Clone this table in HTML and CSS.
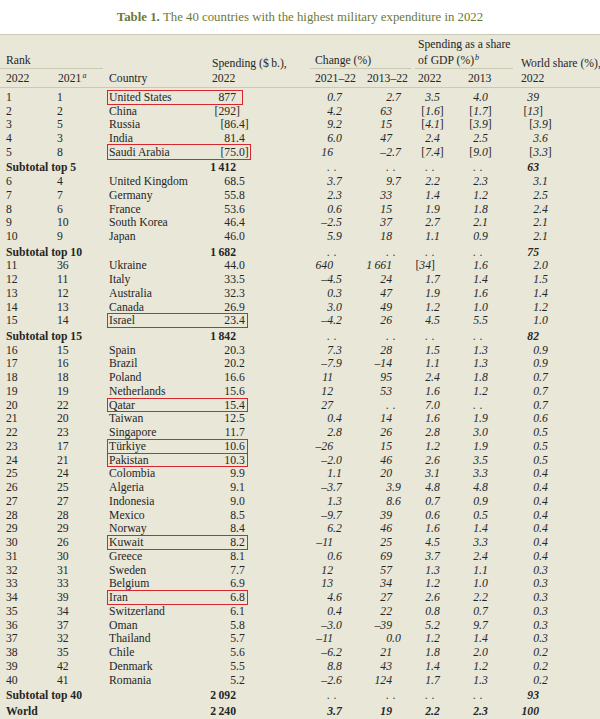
FILE: index.html
```html
<!DOCTYPE html>
<html lang="en">
<head>
<meta charset="utf-8">
<title>Table 1</title>
<link rel="stylesheet" href="styles.css">
</head>
<body>
<div class="title"><span class="tb">Table 1.</span>&nbsp;The 40 countries with the highest military expenditure in 2022</div>
<div class="table">
  <div class="head">
    <div class="h-rank">Rank</div>
    <div class="h-country">Country</div>
    <div class="h-spend">Spending ($&#8201;b.),<br>2022</div>
    <div class="h-change">Change (%)</div>
    <div class="h-gdp">Spending as a share<br>of GDP (%)<sup class="fn">b</sup></div>
    <div class="h-world">World share (%),<br>2022</div>
    <div class="h-r22">2022</div>
    <div class="h-r21">2021<sup class="fn">a</sup></div>
    <div class="h-c1">2021–22</div>
    <div class="h-c2">2013–22</div>
    <div class="h-g1">2022</div>
    <div class="h-g2">2013</div>
  </div>
  <div class="body">
    <div class="row"><span class="r1">1</span><span class="r2">1</span><span class="cn">United States</span><span class="si">877</span><span class="c1i">0</span><span class="c1f">.7</span><span class="c2i">2</span><span class="c2f">.7</span><span class="g1i">3</span><span class="g1f">.5</span><span class="g2i">4</span><span class="g2f">.0</span><span class="wi">39</span><span class="hl hl-us"></span></div>
    <div class="row"><span class="r1">2</span><span class="r2">2</span><span class="cn">China</span><span class="si"><span class="br">[</span>292</span><span class="sf"><span class="br">]</span></span><span class="c1i">4</span><span class="c1f">.2</span><span class="c2i">63</span><span class="g1i"><span class="br">[</span>1</span><span class="g1f">.6<span class="br">]</span></span><span class="g2i"><span class="br">[</span>1</span><span class="g2f">.7<span class="br">]</span></span><span class="wi"><span class="br">[</span>13</span><span class="wf"><span class="br">]</span></span></div>
    <div class="row"><span class="r1">3</span><span class="r2">5</span><span class="cn">Russia</span><span class="si"><span class="br">[</span>86</span><span class="sf">.4<span class="br">]</span></span><span class="c1i">9</span><span class="c1f">.2</span><span class="c2i">15</span><span class="g1i"><span class="br">[</span>4</span><span class="g1f">.1<span class="br">]</span></span><span class="g2i"><span class="br">[</span>3</span><span class="g2f">.9<span class="br">]</span></span><span class="wi"><span class="br">[</span>3</span><span class="wf">.9<span class="br">]</span></span></div>
    <div class="row"><span class="r1">4</span><span class="r2">3</span><span class="cn">India</span><span class="si">81</span><span class="sf">.4</span><span class="c1i">6</span><span class="c1f">.0</span><span class="c2i">47</span><span class="g1i">2</span><span class="g1f">.4</span><span class="g2i">2</span><span class="g2f">.5</span><span class="wi">3</span><span class="wf">.6</span></div>
    <div class="row"><span class="r1">5</span><span class="r2">8</span><span class="cn">Saudi Arabia</span><span class="si"><span class="br">[</span>75</span><span class="sf">.0<span class="br">]</span></span><span class="c1i">16</span><span class="c2i">–2</span><span class="c2f">.7</span><span class="g1i"><span class="br">[</span>7</span><span class="g1f">.4<span class="br">]</span></span><span class="g2i"><span class="br">[</span>9</span><span class="g2f">.0<span class="br">]</span></span><span class="wi"><span class="br">[</span>3</span><span class="wf">.3<span class="br">]</span></span><span class="hl hl-sa"></span></div>
    <div class="row sub"><span class="lab">Subtotal top 5</span><span class="si">1&#8201;412</span><span class="c1i"><span class="dots">. .</span></span><span class="c2i"><span class="dots">. .</span></span><span class="g1i"><span class="dots">. .</span></span><span class="g2i"><span class="dots">. .</span></span><span class="wi">63</span></div>
    <div class="row"><span class="r1">6</span><span class="r2">4</span><span class="cn">United Kingdom</span><span class="si">68</span><span class="sf">.5</span><span class="c1i">3</span><span class="c1f">.7</span><span class="c2i">9</span><span class="c2f">.7</span><span class="g1i">2</span><span class="g1f">.2</span><span class="g2i">2</span><span class="g2f">.3</span><span class="wi">3</span><span class="wf">.1</span></div>
    <div class="row"><span class="r1">7</span><span class="r2">7</span><span class="cn">Germany</span><span class="si">55</span><span class="sf">.8</span><span class="c1i">2</span><span class="c1f">.3</span><span class="c2i">33</span><span class="g1i">1</span><span class="g1f">.4</span><span class="g2i">1</span><span class="g2f">.2</span><span class="wi">2</span><span class="wf">.5</span></div>
    <div class="row"><span class="r1">8</span><span class="r2">6</span><span class="cn">France</span><span class="si">53</span><span class="sf">.6</span><span class="c1i">0</span><span class="c1f">.6</span><span class="c2i">15</span><span class="g1i">1</span><span class="g1f">.9</span><span class="g2i">1</span><span class="g2f">.8</span><span class="wi">2</span><span class="wf">.4</span></div>
    <div class="row"><span class="r1">9</span><span class="r2">10</span><span class="cn">South Korea</span><span class="si">46</span><span class="sf">.4</span><span class="c1i">–2</span><span class="c1f">.5</span><span class="c2i">37</span><span class="g1i">2</span><span class="g1f">.7</span><span class="g2i">2</span><span class="g2f">.1</span><span class="wi">2</span><span class="wf">.1</span></div>
    <div class="row"><span class="r1">10</span><span class="r2">9</span><span class="cn">Japan</span><span class="si">46</span><span class="sf">.0</span><span class="c1i">5</span><span class="c1f">.9</span><span class="c2i">18</span><span class="g1i">1</span><span class="g1f">.1</span><span class="g2i">0</span><span class="g2f">.9</span><span class="wi">2</span><span class="wf">.1</span></div>
    <div class="row sub"><span class="lab">Subtotal top 10</span><span class="si">1&#8201;682</span><span class="c1i"><span class="dots">. .</span></span><span class="c2i"><span class="dots">. .</span></span><span class="g1i"><span class="dots">. .</span></span><span class="g2i"><span class="dots">. .</span></span><span class="wi">75</span></div>
    <div class="row"><span class="r1">11</span><span class="r2">36</span><span class="cn">Ukraine</span><span class="si">44</span><span class="sf">.0</span><span class="c1i">640</span><span class="c2i">1&#8201;661</span><span class="g1i"><span class="br">[</span>34</span><span class="g1f"><span class="br">]</span></span><span class="g2i">1</span><span class="g2f">.6</span><span class="wi">2</span><span class="wf">.0</span></div>
    <div class="row"><span class="r1">12</span><span class="r2">11</span><span class="cn">Italy</span><span class="si">33</span><span class="sf">.5</span><span class="c1i">–4</span><span class="c1f">.5</span><span class="c2i">24</span><span class="g1i">1</span><span class="g1f">.7</span><span class="g2i">1</span><span class="g2f">.4</span><span class="wi">1</span><span class="wf">.5</span></div>
    <div class="row"><span class="r1">13</span><span class="r2">12</span><span class="cn">Australia</span><span class="si">32</span><span class="sf">.3</span><span class="c1i">0</span><span class="c1f">.3</span><span class="c2i">47</span><span class="g1i">1</span><span class="g1f">.9</span><span class="g2i">1</span><span class="g2f">.6</span><span class="wi">1</span><span class="wf">.4</span></div>
    <div class="row"><span class="r1">14</span><span class="r2">13</span><span class="cn">Canada</span><span class="si">26</span><span class="sf">.9</span><span class="c1i">3</span><span class="c1f">.0</span><span class="c2i">49</span><span class="g1i">1</span><span class="g1f">.2</span><span class="g2i">1</span><span class="g2f">.0</span><span class="wi">1</span><span class="wf">.2</span></div>
    <div class="row"><span class="r1">15</span><span class="r2">14</span><span class="cn">Israel</span><span class="si">23</span><span class="sf">.4</span><span class="c1i">–4</span><span class="c1f">.2</span><span class="c2i">26</span><span class="g1i">4</span><span class="g1f">.5</span><span class="g2i">5</span><span class="g2f">.5</span><span class="wi">1</span><span class="wf">.0</span><span class="hl"></span></div>
    <div class="row sub"><span class="lab">Subtotal top 15</span><span class="si">1&#8201;842</span><span class="c1i"><span class="dots">. .</span></span><span class="c2i"><span class="dots">. .</span></span><span class="g1i"><span class="dots">. .</span></span><span class="g2i"><span class="dots">. .</span></span><span class="wi">82</span></div>
    <div class="row"><span class="r1">16</span><span class="r2">15</span><span class="cn">Spain</span><span class="si">20</span><span class="sf">.3</span><span class="c1i">7</span><span class="c1f">.3</span><span class="c2i">28</span><span class="g1i">1</span><span class="g1f">.5</span><span class="g2i">1</span><span class="g2f">.3</span><span class="wi">0</span><span class="wf">.9</span></div>
    <div class="row"><span class="r1">17</span><span class="r2">16</span><span class="cn">Brazil</span><span class="si">20</span><span class="sf">.2</span><span class="c1i">–7</span><span class="c1f">.9</span><span class="c2i">–14</span><span class="g1i">1</span><span class="g1f">.1</span><span class="g2i">1</span><span class="g2f">.3</span><span class="wi">0</span><span class="wf">.9</span></div>
    <div class="row"><span class="r1">18</span><span class="r2">18</span><span class="cn">Poland</span><span class="si">16</span><span class="sf">.6</span><span class="c1i">11</span><span class="c2i">95</span><span class="g1i">2</span><span class="g1f">.4</span><span class="g2i">1</span><span class="g2f">.8</span><span class="wi">0</span><span class="wf">.7</span></div>
    <div class="row"><span class="r1">19</span><span class="r2">19</span><span class="cn">Netherlands</span><span class="si">15</span><span class="sf">.6</span><span class="c1i">12</span><span class="c2i">53</span><span class="g1i">1</span><span class="g1f">.6</span><span class="g2i">1</span><span class="g2f">.2</span><span class="wi">0</span><span class="wf">.7</span></div>
    <div class="row"><span class="r1">20</span><span class="r2">22</span><span class="cn">Qatar</span><span class="si">15</span><span class="sf">.4</span><span class="c1i">27</span><span class="c2i"><span class="dots">. .</span></span><span class="g1i">7</span><span class="g1f">.0</span><span class="g2i"><span class="dots">. .</span></span><span class="wi">0</span><span class="wf">.7</span><span class="hl"></span></div>
    <div class="row"><span class="r1">21</span><span class="r2">20</span><span class="cn">Taiwan</span><span class="si">12</span><span class="sf">.5</span><span class="c1i">0</span><span class="c1f">.4</span><span class="c2i">14</span><span class="g1i">1</span><span class="g1f">.6</span><span class="g2i">1</span><span class="g2f">.9</span><span class="wi">0</span><span class="wf">.6</span></div>
    <div class="row"><span class="r1">22</span><span class="r2">23</span><span class="cn">Singapore</span><span class="si">11</span><span class="sf">.7</span><span class="c1i">2</span><span class="c1f">.8</span><span class="c2i">26</span><span class="g1i">2</span><span class="g1f">.8</span><span class="g2i">3</span><span class="g2f">.0</span><span class="wi">0</span><span class="wf">.5</span></div>
    <div class="row"><span class="r1">23</span><span class="r2">17</span><span class="cn">Türkiye</span><span class="si">10</span><span class="sf">.6</span><span class="c1i">–26</span><span class="c2i">15</span><span class="g1i">1</span><span class="g1f">.2</span><span class="g2i">1</span><span class="g2f">.9</span><span class="wi">0</span><span class="wf">.5</span><span class="hl"></span></div>
    <div class="row"><span class="r1">24</span><span class="r2">21</span><span class="cn">Pakistan</span><span class="si">10</span><span class="sf">.3</span><span class="c1i">–2</span><span class="c1f">.0</span><span class="c2i">46</span><span class="g1i">2</span><span class="g1f">.6</span><span class="g2i">3</span><span class="g2f">.5</span><span class="wi">0</span><span class="wf">.5</span><span class="hl"></span></div>
    <div class="row"><span class="r1">25</span><span class="r2">24</span><span class="cn">Colombia</span><span class="si">9</span><span class="sf">.9</span><span class="c1i">1</span><span class="c1f">.1</span><span class="c2i">20</span><span class="g1i">3</span><span class="g1f">.1</span><span class="g2i">3</span><span class="g2f">.3</span><span class="wi">0</span><span class="wf">.4</span></div>
    <div class="row"><span class="r1">26</span><span class="r2">25</span><span class="cn">Algeria</span><span class="si">9</span><span class="sf">.1</span><span class="c1i">–3</span><span class="c1f">.7</span><span class="c2i">3</span><span class="c2f">.9</span><span class="g1i">4</span><span class="g1f">.8</span><span class="g2i">4</span><span class="g2f">.8</span><span class="wi">0</span><span class="wf">.4</span></div>
    <div class="row"><span class="r1">27</span><span class="r2">27</span><span class="cn">Indonesia</span><span class="si">9</span><span class="sf">.0</span><span class="c1i">1</span><span class="c1f">.3</span><span class="c2i">8</span><span class="c2f">.6</span><span class="g1i">0</span><span class="g1f">.7</span><span class="g2i">0</span><span class="g2f">.9</span><span class="wi">0</span><span class="wf">.4</span></div>
    <div class="row"><span class="r1">28</span><span class="r2">28</span><span class="cn">Mexico</span><span class="si">8</span><span class="sf">.5</span><span class="c1i">–9</span><span class="c1f">.7</span><span class="c2i">39</span><span class="g1i">0</span><span class="g1f">.6</span><span class="g2i">0</span><span class="g2f">.5</span><span class="wi">0</span><span class="wf">.4</span></div>
    <div class="row"><span class="r1">29</span><span class="r2">29</span><span class="cn">Norway</span><span class="si">8</span><span class="sf">.4</span><span class="c1i">6</span><span class="c1f">.2</span><span class="c2i">46</span><span class="g1i">1</span><span class="g1f">.6</span><span class="g2i">1</span><span class="g2f">.4</span><span class="wi">0</span><span class="wf">.4</span></div>
    <div class="row"><span class="r1">30</span><span class="r2">26</span><span class="cn">Kuwait</span><span class="si">8</span><span class="sf">.2</span><span class="c1i">–11</span><span class="c2i">25</span><span class="g1i">4</span><span class="g1f">.5</span><span class="g2i">3</span><span class="g2f">.3</span><span class="wi">0</span><span class="wf">.4</span><span class="hl"></span></div>
    <div class="row"><span class="r1">31</span><span class="r2">30</span><span class="cn">Greece</span><span class="si">8</span><span class="sf">.1</span><span class="c1i">0</span><span class="c1f">.6</span><span class="c2i">69</span><span class="g1i">3</span><span class="g1f">.7</span><span class="g2i">2</span><span class="g2f">.4</span><span class="wi">0</span><span class="wf">.4</span></div>
    <div class="row"><span class="r1">32</span><span class="r2">31</span><span class="cn">Sweden</span><span class="si">7</span><span class="sf">.7</span><span class="c1i">12</span><span class="c2i">57</span><span class="g1i">1</span><span class="g1f">.3</span><span class="g2i">1</span><span class="g2f">.1</span><span class="wi">0</span><span class="wf">.3</span></div>
    <div class="row"><span class="r1">33</span><span class="r2">33</span><span class="cn">Belgium</span><span class="si">6</span><span class="sf">.9</span><span class="c1i">13</span><span class="c2i">34</span><span class="g1i">1</span><span class="g1f">.2</span><span class="g2i">1</span><span class="g2f">.0</span><span class="wi">0</span><span class="wf">.3</span></div>
    <div class="row"><span class="r1">34</span><span class="r2">39</span><span class="cn">Iran</span><span class="si">6</span><span class="sf">.8</span><span class="c1i">4</span><span class="c1f">.6</span><span class="c2i">27</span><span class="g1i">2</span><span class="g1f">.6</span><span class="g2i">2</span><span class="g2f">.2</span><span class="wi">0</span><span class="wf">.3</span><span class="hl"></span></div>
    <div class="row"><span class="r1">35</span><span class="r2">34</span><span class="cn">Switzerland</span><span class="si">6</span><span class="sf">.1</span><span class="c1i">0</span><span class="c1f">.4</span><span class="c2i">22</span><span class="g1i">0</span><span class="g1f">.8</span><span class="g2i">0</span><span class="g2f">.7</span><span class="wi">0</span><span class="wf">.3</span></div>
    <div class="row"><span class="r1">36</span><span class="r2">37</span><span class="cn">Oman</span><span class="si">5</span><span class="sf">.8</span><span class="c1i">–3</span><span class="c1f">.0</span><span class="c2i">–39</span><span class="g1i">5</span><span class="g1f">.2</span><span class="g2i">9</span><span class="g2f">.7</span><span class="wi">0</span><span class="wf">.3</span></div>
    <div class="row"><span class="r1">37</span><span class="r2">32</span><span class="cn">Thailand</span><span class="si">5</span><span class="sf">.7</span><span class="c1i">–11</span><span class="c2i">0</span><span class="c2f">.0</span><span class="g1i">1</span><span class="g1f">.2</span><span class="g2i">1</span><span class="g2f">.4</span><span class="wi">0</span><span class="wf">.3</span></div>
    <div class="row"><span class="r1">38</span><span class="r2">35</span><span class="cn">Chile</span><span class="si">5</span><span class="sf">.6</span><span class="c1i">–6</span><span class="c1f">.2</span><span class="c2i">21</span><span class="g1i">1</span><span class="g1f">.8</span><span class="g2i">2</span><span class="g2f">.0</span><span class="wi">0</span><span class="wf">.2</span></div>
    <div class="row"><span class="r1">39</span><span class="r2">42</span><span class="cn">Denmark</span><span class="si">5</span><span class="sf">.5</span><span class="c1i">8</span><span class="c1f">.8</span><span class="c2i">43</span><span class="g1i">1</span><span class="g1f">.4</span><span class="g2i">1</span><span class="g2f">.2</span><span class="wi">0</span><span class="wf">.2</span></div>
    <div class="row"><span class="r1">40</span><span class="r2">41</span><span class="cn">Romania</span><span class="si">5</span><span class="sf">.2</span><span class="c1i">–2</span><span class="c1f">.6</span><span class="c2i">124</span><span class="g1i">1</span><span class="g1f">.7</span><span class="g2i">1</span><span class="g2f">.3</span><span class="wi">0</span><span class="wf">.2</span></div>
    <div class="row sub"><span class="lab">Subtotal top 40</span><span class="si">2&#8201;092</span><span class="c1i"><span class="dots">. .</span></span><span class="c2i"><span class="dots">. .</span></span><span class="g1i"><span class="dots">. .</span></span><span class="g2i"><span class="dots">. .</span></span><span class="wi">93</span></div>
    <div class="row sub world"><span class="lab">World</span><span class="si">2&#8201;240</span><span class="c1i">3</span><span class="c1f">.7</span><span class="c2i">19</span><span class="g1i">2</span><span class="g1f">.2</span><span class="g2i">2</span><span class="g2f">.3</span><span class="wi">100</span></div>
  </div>
</div>
</body>
</html>
```

FILE: styles.css
```css
html, body {
  margin: 0;
  padding: 0;
  background: #ffffff;
}

body {
  font-family: "Liberation Serif", "Times New Roman", serif;
  font-size: 11.7px;
  color: #262626;
  width: 600px;
  overflow: hidden;
}

.title {
  height: 34px;
  display: flex;
  align-items: center;
  justify-content: center;
  color: #6c7a38;
  font-size: 12.8px;
  white-space: nowrap;
}

.tb {
  font-weight: bold;
}

.table {
  background: #e8e7d8;
  border-top: 1px solid #c9cab1;
  min-height: calc(100vh - 35px);
}

/* ---------- header ---------- */
.head {
  display: grid;
  grid-template-columns: 57px 52px 103px 98px 56px 47px 53px 50px 1fr;
  grid-template-rows: 34px 18px;
  border-bottom: 1px solid #c9cab1;
  line-height: 15px;
}

.head > div {
  white-space: nowrap;
}

.h-rank {
  grid-column: 1 / 3;
  grid-row: 1;
  align-self: end;
  padding-left: 6px;
  margin-right: 6px;
  line-height: 14px;
  border-bottom: 1px solid #c9cab1;
}

.h-country {
  grid-column: 3;
  grid-row: 1 / 3;
  align-self: end;
  padding-bottom: 1px;
}

.h-spend {
  grid-column: 4;
  grid-row: 1 / 3;
  align-self: end;
  padding-bottom: 1px;
}

.h-change {
  grid-column: 5 / 7;
  grid-row: 1;
  align-self: end;
  padding-left: 5px;
  margin-right: 2px;
  line-height: 14px;
  border-bottom: 1px solid #c9cab1;
}

.h-gdp {
  grid-column: 7 / 9;
  grid-row: 1;
  align-self: end;
  margin-left: 2px;
  margin-right: 3px;
  padding-left: 3px;
  line-height: 15.5px;
  border-bottom: 1px solid #c9cab1;
}

.h-world {
  grid-column: 9;
  grid-row: 1 / 3;
  align-self: end;
  padding-left: 5px;
  padding-bottom: 1px;
}

.h-r22 { grid-column: 1; grid-row: 2; padding-left: 6px; padding-top: 2px; }
.h-r21 { grid-column: 2; grid-row: 2; padding-left: 1px; padding-top: 2px; }
.h-c1 { grid-column: 5; grid-row: 2; padding-left: 5px; padding-top: 2px; }
.h-c2 { grid-column: 6; grid-row: 2; padding-left: 1px; padding-top: 2px; }
.h-g1 { grid-column: 7; grid-row: 2; padding-left: 5px; padding-top: 2px; }
.h-g2 { grid-column: 8; grid-row: 2; padding-left: 2px; padding-top: 2px; }

.fn {
  font-style: italic;
  font-size: 8px;
  line-height: 0;
  vertical-align: 4px;
  margin-left: 1px;
}

/* ---------- body ---------- */
.body {
  padding-top: 2.8px;
}

.row {
  display: grid;
  grid-template-columns: 51px 52px 81px 46px 14px 83px 19px 40px 16px 23px 24px 24px 21px 39px 1fr;
  padding-left: 6px;
  height: 13.75px;
  line-height: 13.75px;
  white-space: nowrap;
}

.row > * {
  grid-row: 1;
}

.row.sub {
  height: 15.5px;
  padding-top: 1.75px;
  box-sizing: border-box;
  height: 15.5px;
}

.r1 { grid-column: 1; }
.r2 { grid-column: 2; }
.cn { grid-column: 3; }
.lab { grid-column: 1 / 4; font-weight: bold; }

.si { grid-column: 4; text-align: right; }
.sf { grid-column: 5; }
.c1i { grid-column: 6; text-align: right; }
.c1f { grid-column: 7; }
.c2i { grid-column: 8; text-align: right; }
.c2f { grid-column: 9; }
.g1i { grid-column: 10; text-align: right; }
.g1f { grid-column: 11; }
.g2i { grid-column: 12; text-align: right; }
.g2f { grid-column: 13; }
.wi { grid-column: 14; text-align: right; }
.wf { grid-column: 15; }

.c1i, .c1f, .c2i, .c2f, .g1i, .g1f, .g2i, .g2f, .wi, .wf {
  font-style: italic;
}

.br {
  font-style: normal;
}

.sub .si,
.sub .wi,
.world .c1i, .world .c1f, .world .c2i, .world .c2f,
.world .g1i, .world .g1f, .world .g2i, .world .g2f {
  font-weight: bold;
}

.dots {
  display: inline-block;
  font-style: normal;
  font-weight: normal;
  margin-right: -4px;
  letter-spacing: 0.5px;
  color: #444;
}

.hl {
  grid-column: 3 / 6;
  margin-left: -2px;
  margin-right: 2px;
  margin-top: -1px;
  border: 1.5px solid #d8262f;
  box-sizing: border-box;
}

.hl-us {
  margin-right: 7px;
}

.hl-sa {
  margin-right: -1px;
  margin-top: -2px;
}
```
